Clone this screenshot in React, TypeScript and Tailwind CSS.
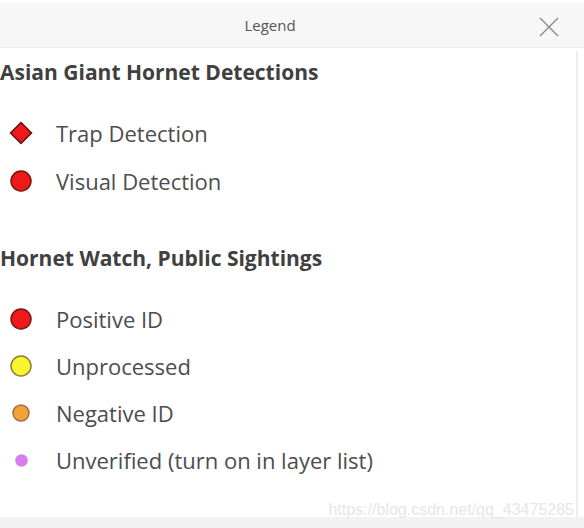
import React from 'react'

type Item = { label: string; symbol: React.ReactNode }

const Circle = ({ size, fill, stroke }: { size: number; fill: string; stroke: string }) => (
  <svg width={size} height={size} viewBox={`0 0 ${size} ${size}`}>
    <circle cx={size / 2} cy={size / 2} r={size / 2 - 1} fill={fill} stroke={stroke} strokeWidth={1.5} />
  </svg>
)

const Diamond = () => (
  <svg width={24} height={24} viewBox="0 0 24 24">
    <path d="M12 1.5 L22.5 12 L12 22.5 L1.5 12 Z" fill="#f01818" stroke="#5a1010" strokeWidth={1.5} />
  </svg>
)

const sections: { title: string; gap: string; items: Item[] }[] = [
  {
    title: 'Asian Giant Hornet Detections',
    gap: 'gap-[24px]',
    items: [
      { label: 'Trap Detection', symbol: <Diamond /> },
      { label: 'Visual Detection', symbol: <Circle size={22} fill="#ee1a1a" stroke="#7a1414" /> },
    ],
  },
  {
    title: 'Hornet Watch, Public Sightings',
    gap: 'gap-[23px]',
    items: [
      { label: 'Positive ID', symbol: <Circle size={22} fill="#ee1a1a" stroke="#7a1414" /> },
      { label: 'Unprocessed', symbol: <Circle size={22} fill="#f8f52e" stroke="#8a8030" /> },
      { label: 'Negative ID', symbol: <Circle size={18} fill="#f2a23a" stroke="#a07040" /> },
      { label: 'Unverified (turn on in layer list)', symbol: <Circle size={13} fill="#d87cf0" stroke="#d87cf0" /> },
    ],
  },
]

export default function App() {
  return (
    <div className="w-[584px] h-[528px] bg-white flex flex-col overflow-hidden" style={{ fontFamily: '"Open Sans", "Noto Sans", sans-serif' }}>
      {/* Header */}
      <div className="mt-[3px] h-[45px] bg-[#f7f7f7] border-b border-[#ececec] flex items-center relative shrink-0">
        <div className="flex-1 text-center text-[15px] text-[#555]">
          <span className="relative left-[-22px]">Legend</span>
        </div>
        <svg className="absolute right-[25px] top-[14px]" width={20} height={20} viewBox="0 0 20 20">
          <path d="M1 1 L19 19 M19 1 L1 19" stroke="#8a8a8a" strokeWidth={1.4} fill="none" />
        </svg>
      </div>

      {/* Content */}
      <div className="flex-1 flex mt-[3px]">
        <div className="w-[578px] border-r-2 border-[#eeeeee] flex flex-col relative">
          {sections.map((s, i) => (
            <div key={s.title} className={i === 0 ? 'pt-[9px]' : 'pt-[53px]'}>
              <div className="text-[21px] font-bold text-[#404040] leading-[24px]">{s.title}</div>
              <div className={`flex flex-col pt-[37px] ${s.gap}`}>
                {s.items.map(it => (
                  <div key={it.label} className="flex items-center h-[24px]">
                    <div className="w-[42px] flex justify-center items-center">{it.symbol}</div>
                    <div className="ml-[14px] text-[22px] text-[#4d4d4d] leading-[24px]">{it.label}</div>
                  </div>
                ))}
              </div>
            </div>
          ))}
          <div
            className="absolute right-[2px] bottom-[-5px] text-[16px] text-[#e6e6e6]"
            style={{ fontFamily: '"Liberation Sans", Arial, sans-serif' }}
          >
            https://blog.csdn.net/qq_43475285
          </div>
        </div>
      </div>

      {/* Bottom strip */}
      <div className="h-[11px] bg-[#f2f2f2] shrink-0" />
    </div>
  )
}
